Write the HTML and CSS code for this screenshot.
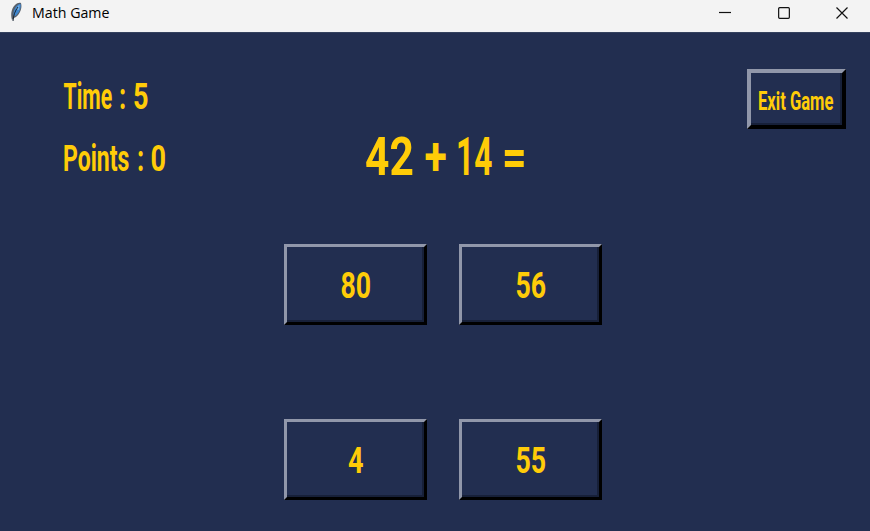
FILE: index.html
```html
<!DOCTYPE html>
<html lang="en">
<head>
<meta charset="utf-8">
<title>Math Game</title>
<link rel="stylesheet" href="styles.css">
</head>
<body>
<div class="window">
  <header class="titlebar">
    <svg class="feather" width="14" height="22" viewBox="0 0 14 22">
      <path d="M2 19C.5 14 1 8 5 4C7 2 9 1.500 11 2C12.500 7 10 13 6 16L4 17Z" fill="#59616b"/>
      <path d="M3.500 14.500C3 9 6 4 10.500 2.800C11.500 7 9 12 5.500 15Z" fill="#3f87cf"/>
      <path d="M6 8L9.500 3.500L9 9Z" fill="#78b5ea"/>
      <path d="M3 20C3.500 14 5 10 8 6" fill="none" stroke="#182533" stroke-width="1"/>
    </svg>
    <svg class="title" width="82" height="22"><text x="0" y="16" textLength="77.500" lengthAdjust="spacingAndGlyphs">Math Game</text></svg>
    <div class="controls">
      <svg width="12" height="12"><path d="M0 5.500H12"/></svg>
      <svg width="12" height="12"><rect x=".65" y=".65" width="10.700" height="10.700" rx="1"/></svg>
      <svg width="12" height="12"><path d="M.5 .5L11.500 11.500M11.500 .5L.5 11.500"/></svg>
    </div>
  </header>
  <main class="game">
    <section class="top">
      <div class="stats">
        <svg width="110" height="38">
          <text transform="translate(.5 32.500) scale(.58 1)">Time</text>
          <text transform="translate(56 32.500) scale(.7 1)">:</text>
          <text transform="translate(70 32.500) scale(.74 1)">5</text>
        </svg>
        <svg width="110" height="38">
          <text transform="translate(0 32) scale(.65 1)" textLength="102" lengthAdjust="spacingAndGlyphs">Points</text>
          <text transform="translate(74 32) scale(.7 1)">:</text>
          <text transform="translate(87.500 32) scale(.74 1)">0</text>
        </svg>
      </div>
      <svg class="question" width="170" height="56">
        <text transform="translate(4 46.500) scale(.78 1)">42</text>
        <text transform="translate(63.500 46.500) scale(.75 1)">+</text>
        <text transform="translate(95 46.500) scale(.58 1)">14</text>
        <text transform="translate(141 46.500) scale(.79 1)">=</text>
      </svg>
      <button class="key exit"><svg width="80" height="30"><text transform="translate(1 25.500) scale(.65 1)" textLength="116" lengthAdjust="spacingAndGlyphs">Exit Game</text></svg></button>
    </section>
    <section class="answers">
      <button class="key"><svg width="36" height="38"><text transform="translate(2.500 31.500) scale(.73 1)">80</text></svg></button>
      <button class="key"><svg width="36" height="38"><text transform="translate(2.500 31.500) scale(.73 1)">56</text></svg></button>
      <button class="key"><svg width="36" height="38"><text transform="translate(10 31.500) scale(.74 1)">4</text></svg></button>
      <button class="key"><svg width="36" height="38"><text transform="translate(2.500 31.500) scale(.73 1)">55</text></svg></button>
    </section>
  </main>
</div>
</body>
</html>
```
FILE: styles.css
```css
* { box-sizing: border-box; }
body { margin: 0; overflow: hidden; background: #222e50; }
svg { display: block; flex: none; overflow: visible; }
.window { width: 870px; height: 531px; }
.titlebar {
  display: flex;
  height: 32px;
  padding: 1px 22px 0 10px;
  background: #f3f3f3;
}
.title { margin: 1px 0 0 8px; font: 15px "Open Sans", "Noto Sans", sans-serif; }
.controls { display: flex; gap: 46.5px; margin: 6px 0 0 auto; }
.controls svg { fill: none; stroke: #111; stroke-width: 1.2; }
.game {
  height: 499px;
  background: #222e50;
  border-top: 1px solid #34415e;
  font: bold 36.6px Roboto, sans-serif;
  fill: #ffcc08;
}
.top { display: flex; height: 211px; padding: 36px 24px 0 63px; }
.stats { display: flex; flex-direction: column; gap: 25px; padding-top: 7px; }
.question { margin: 59px 0 0 188px; font-size: 54.5px; }
.key {
  display: flex;
  align-items: center;
  justify-content: center;
  width: 143px;
  height: 80.5px;
  padding: 2px 0 0 1px;
  border: 3px solid;
  border-color: #9197aa #000 #000 #9197aa;
  background: #222e50;
  box-shadow: inset -2px -2px #172039;
  font: inherit;
  fill: inherit;
}
.exit {
  width: 99px;
  height: 60px;
  margin-left: auto;
  padding: 0;
  border-width: 4px;
  font-size: 26.5px;
}
.answers {
  display: grid;
  grid-template-columns: repeat(2, 143px);
  grid-auto-rows: 81px;
  column-gap: 32px;
  row-gap: 94px;
  margin-left: 284px;
}
```
